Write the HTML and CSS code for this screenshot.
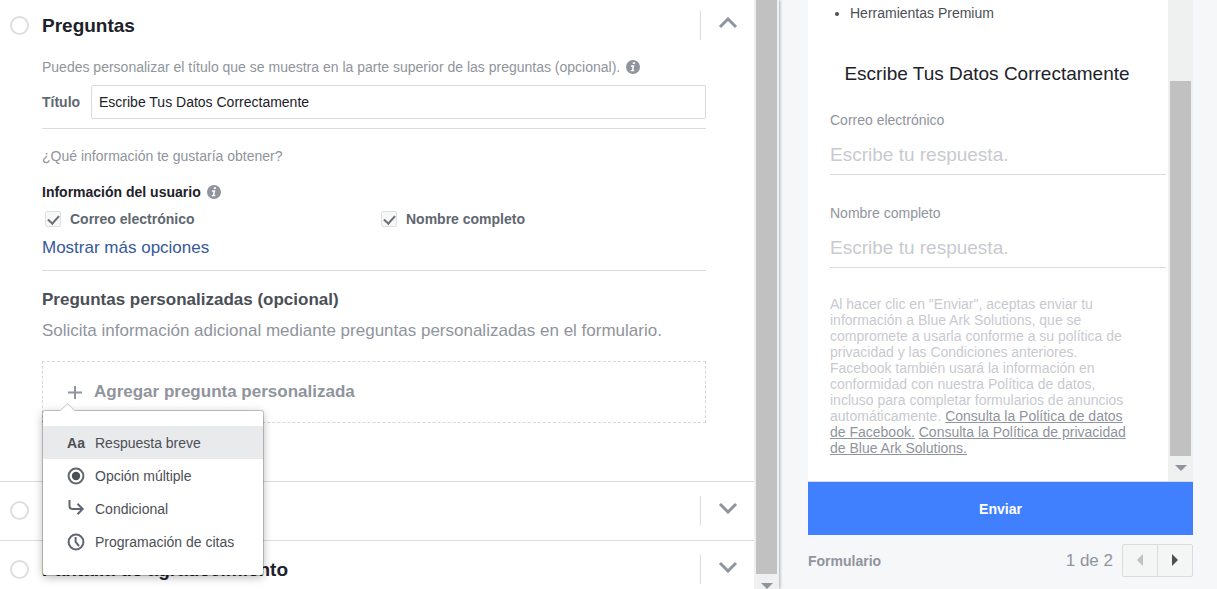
FILE: index.html
```html
<!DOCTYPE html>
<html lang="es">

<head>
    <meta charset="utf-8">
    <meta name="viewport" content="width=device-width, initial-scale=1.0">
    <title>Formulario</title>
    <link rel="stylesheet" href="styles.css">
</head>

<body>
    <div class="app">

        <!-- Editor -->
        <main class="editor">
            <div class="editor-content">

                <section class="section section-open">
                    <div class="section-header">
                        <span class="step"></span>
                        <h2>Preguntas</h2>
                        <button type="button" class="toggle" aria-label="Contraer">
                            <svg width="20" height="12" viewBox="0 0 20 12"><path d="M2 10 L10 2 L18 10"/></svg>
                        </button>
                    </div>

                    <div class="section-body">
                        <p class="hint">Puedes personalizar el título que se muestra en la parte superior de las preguntas (opcional).
                            <svg class="info" width="14" height="14" viewBox="0 0 14 14"><circle cx="7" cy="7" r="7"/><path d="M7 2.2h2.2l-.4 1.9H6.6z M5.2 5.3h3.2l-1 4.6h1l-.3 1.4H4.6l.3-1.4h.9l.7-3.2H4.9z"/></svg>
                        </p>

                        <div class="title-row">
                            <label for="titulo">Título</label>
                            <input type="text" id="titulo" name="titulo" value="Escribe Tus Datos Correctamente">
                        </div>

                        <div class="group">
                            <p class="hint">¿Qué información te gustaría obtener?</p>
                            <h4>Información del usuario
                                <svg class="info" width="14" height="14" viewBox="0 0 14 14"><circle cx="7" cy="7" r="7"/><path d="M7 2.2h2.2l-.4 1.9H6.6z M5.2 5.3h3.2l-1 4.6h1l-.3 1.4H4.6l.3-1.4h.9l.7-3.2H4.9z"/></svg>
                            </h4>
                            <div class="checks">
                                <label class="check" for="correo"><input type="checkbox" id="correo" checked>Correo electrónico</label>
                                <label class="check" for="nombre"><input type="checkbox" id="nombre" checked>Nombre completo</label>
                            </div>
                            <a class="more" href="#">Mostrar más opciones</a>
                        </div>

                        <div class="group custom">
                            <h3>Preguntas personalizadas (opcional)</h3>
                            <p class="lead">Solicita información adicional mediante preguntas personalizadas en el formulario.</p>

                            <div class="add-box">
                                <button type="button" class="add-btn">
                                    <svg width="14" height="14" viewBox="0 0 14 14"><path d="M7 1v13M0 7.500h14"/></svg>
                                    Agregar pregunta personalizada
                                </button>

                                <!-- Menú de tipos de pregunta -->
                                <div class="menu">
                                    <button type="button" class="menu-item active">
                                        <span class="menu-icon letters">Aa</span>Respuesta breve
                                    </button>
                                    <button type="button" class="menu-item">
                                        <svg class="menu-icon" width="18" height="18" viewBox="0 0 18 18"><circle cx="9" cy="9" r="7.4"/><circle class="dot" cx="9" cy="9" r="4.2"/></svg>Opción múltiple
                                    </button>
                                    <button type="button" class="menu-item">
                                        <svg class="menu-icon" width="18" height="18" viewBox="0 0 18 18"><path d="M2.500 0v6a3 3 0 0 0 3 3h10M10.500 3.800l5.200 5.200-5.200 5.200"/></svg>Condicional
                                    </button>
                                    <button type="button" class="menu-item">
                                        <svg class="menu-icon" width="18" height="18" viewBox="0 0 18 18"><circle cx="9" cy="9" r="7.4"/><path d="M8.6 4v5l3.4 4"/></svg>Programación de citas
                                    </button>
                                </div>
                            </div>
                        </div>
                    </div>
                </section>

                <section class="section">
                    <div class="section-header">
                        <span class="step"></span>
                        <h2></h2>
                        <button type="button" class="toggle" aria-label="Expandir">
                            <svg width="20" height="12" viewBox="0 0 20 12"><path d="M2 2 L10 10 L18 2"/></svg>
                        </button>
                    </div>
                </section>

                <section class="section">
                    <div class="section-header">
                        <span class="step"></span>
                        <h2>Pantalla de agradecimiento</h2>
                        <button type="button" class="toggle" aria-label="Expandir">
                            <svg width="20" height="12" viewBox="0 0 20 12"><path d="M2 2 L10 10 L18 2"/></svg>
                        </button>
                    </div>
                </section>
            </div>

            <div class="scrollbar">
                <div class="thumb"></div>
                <svg class="arrow" width="12" height="6" viewBox="0 0 12 6"><path d="M0 0h12L6 6z"/></svg>
            </div>
        </main>

        <!-- Vista previa -->
        <aside class="preview">
            <div class="phone">
                <div class="phone-view">
                    <div class="phone-content">
                        <ul>
                            <li>Herramientas Premium</li>
                        </ul>
                        <h1>Escribe Tus Datos Correctamente</h1>
                        <div class="field">
                            <label for="p-correo">Correo electrónico</label>
                            <input type="text" id="p-correo" placeholder="Escribe tu respuesta.">
                        </div>
                        <div class="field">
                            <label for="p-nombre">Nombre completo</label>
                            <input type="text" id="p-nombre" placeholder="Escribe tu respuesta.">
                        </div>
                        <p class="legal">Al hacer clic en "Enviar", aceptas enviar tu información a Blue Ark Solutions, que se compromete a usarla conforme a su política de privacidad y las Condiciones anteriores. Facebook también usará la información en conformidad con nuestra Política de datos, incluso para completar formularios de anuncios automáticamente. <a href="#">Consulta la Política de datos de Facebook.</a> <a href="#">Consulta la Política de privacidad de Blue Ark Solutions.</a></p>
                    </div>
                    <div class="scrollbar phone-scroll">
                        <div class="thumb"></div>
                        <svg class="arrow" width="12" height="6" viewBox="0 0 12 6"><path d="M0 0h12L6 6z"/></svg>
                    </div>
                </div>
                <button type="button" class="send">Enviar</button>
            </div>

            <div class="pager">
                <b>Formulario</b>
                <span>1 de 2</span>
                <div class="pager-buttons">
                    <button type="button" aria-label="Anterior" disabled><svg width="6" height="12" viewBox="0 0 6 12"><path d="M6 0v12L0 6z"/></svg></button>
                    <button type="button" aria-label="Siguiente"><svg width="6" height="12" viewBox="0 0 6 12"><path d="M0 0v12l6-6z"/></svg></button>
                </div>
            </div>
        </aside>

    </div>
</body>

</html>
```
FILE: styles.css
```css
* {
    box-sizing: border-box;
}

body {
    margin: 0;
    font-family: "Liberation Sans", Arial, sans-serif;
    font-size: 14px;
    line-height: 20px;
    color: #4b4f56;
    background-color: #f6f7f9;
}

h1, h2, h3, h4, p, ul {
    margin: 0;
}

button, input {
    font: inherit;
    color: inherit;
}

button {
    border: none;
    padding: 0;
    background: none;
    cursor: pointer;
}

.app {
    display: flex;
    height: 100vh;
    overflow: hidden;
}

/* Editor */
.editor {
    display: flex;
    flex: 1;
    min-width: 0;
    background-color: #fff;
    box-shadow: 1px 0 3px rgba(0, 0, 0, 0.3);
    z-index: 1;
}

.editor-content {
    flex: 1;
    min-width: 0;
}

.section {
    border-top: 1px solid #dadbdd;
}

.section-open {
    border-top: none;
}

.section-header {
    display: flex;
    align-items: center;
    padding: 14px 0 15px 10px;
}

.section-open .section-header {
    padding-top: 11px;
}

.step {
    width: 19px;
    height: 19px;
    margin-right: 13px;
    border: 2px solid #dddfe2;
    border-radius: 50%;
}

.section-header h2 {
    flex: 1;
    font-size: 19px;
    color: #1d2129;
}

.toggle {
    width: 54px;
    height: 29px;
    padding-bottom: 7px;
    border-left: 1px solid #dadbdd;
}

.toggle svg {
    fill: none;
    stroke: #90949c;
    stroke-width: 3;
    vertical-align: middle;
}

.section-body {
    padding: 2px 48px 58px 42px;
}

.hint {
    color: #90949c;
}

.info {
    margin-left: 2px;
    vertical-align: -2px;
    fill: #90949c;
}

.info path {
    fill: #fff;
}

.title-row {
    display: flex;
    align-items: center;
    margin-top: 8px;
    padding-bottom: 9px;
}

.title-row label {
    flex: 0 0 49px;
    font-weight: bold;
    color: #606770;
}

.title-row input {
    flex: 1;
    min-width: 0;
    height: 34px;
    padding: 0 7px;
    border: 1px solid #dadbdd;
    border-radius: 2px;
    color: #1d2129;
}

.group {
    padding: 17px 0 12px;
    border-top: 1px solid #dadbdd;
}

.group h4 {
    margin-top: 16px;
    font-size: 14px;
    color: #1d2129;
}

.checks {
    display: grid;
    grid-template-columns: 1fr 1fr;
    column-gap: 8px;
    margin: 7px 0 9px;
}

.check {
    display: flex;
    align-items: center;
    padding-left: 3px;
    font-weight: bold;
    color: #606770;
}

.check input {
    appearance: none;
    display: grid;
    place-items: center;
    width: 16px;
    height: 16px;
    margin: 0 9px 0 0;
    border: 1px solid #dddfe2;
    border-radius: 2px;
    background-color: #f8f8f9;
}

.check input:checked::after {
    content: "";
    width: 5px;
    height: 9px;
    margin-bottom: 2px;
    border: solid #6b6f78;
    border-width: 0 2px 2px 0;
    transform: rotate(42deg);
}

.more {
    display: block;
    font-size: 17px;
    color: #365899;
    text-decoration: none;
}

.custom {
    padding: 19px 0 0;
}

.custom h3 {
    font-size: 17px;
    color: #4b4f56;
}

.lead {
    margin: 11px 0 20px;
    font-size: 17px;
    color: #90949c;
}

.add-box {
    position: relative;
    height: 62px;
    padding: 0 25px;
    border: 1px dashed #d5d7da;
}

.add-btn {
    display: flex;
    align-items: center;
    gap: 12px;
    height: 60px;
    font-size: 17px;
    font-weight: bold;
    color: #90949c;
}

.add-btn svg {
    stroke: #90949c;
    stroke-width: 2;
}

/* Menú desplegable */
.menu {
    position: absolute;
    top: 49px;
    left: 0;
    width: 220px;
    padding: 15px 0 17px;
    background-color: #fff;
    border-radius: 2px;
    box-shadow: 0 0 0 1px rgba(0, 0, 0, 0.2), 0 2px 10px rgba(0, 0, 0, 0.3);
}

.menu::before {
    content: "";
    position: absolute;
    top: -6px;
    left: 19px;
    width: 10px;
    height: 10px;
    background-color: #fff;
    border: solid #cfd0d2;
    border-width: 1px 0 0 1px;
    transform: rotate(45deg);
}

.menu-item {
    display: flex;
    align-items: center;
    gap: 10px;
    width: 100%;
    height: 33px;
    padding-left: 24px;
    color: #4b4f56;
}

.menu-item.active {
    background-color: #e9eaeb;
}

.menu-icon {
    width: 18px;
    fill: none;
    stroke: #606770;
    stroke-width: 2;
}

.menu-icon .dot {
    fill: #4b4f56;
    stroke: none;
}

.letters {
    font-weight: bold;
}

/* Barras de desplazamiento */
.scrollbar {
    display: flex;
    flex-direction: column;
    align-items: center;
    flex: 0 0 25px;
    background-color: #eff1f1;
}

.thumb {
    flex: 1;
    width: 21px;
    margin-bottom: 9px;
    background-color: #c1c1c1;
}

.arrow {
    fill: #90949c;
}

/* Vista previa */
.preview {
    flex: 0 0 438px;
    padding: 0 24px 0 29px;
}

.phone-view {
    display: flex;
    background-color: #fff;
    border-bottom: 1px solid #dadbdd;
}

.phone-content {
    flex: 1;
    min-width: 0;
    padding: 3px 2px 25px 22px;
}

.phone-content ul {
    padding-left: 20px;
}

.phone-content h1 {
    margin: 38px 0 24px;
    padding-right: 22px;
    font-size: 19px;
    font-weight: normal;
    line-height: 25px;
    text-align: center;
    color: #1d2129;
}

.field {
    margin-bottom: 28px;
}

.field label {
    display: block;
    color: #90949c;
}

.field input {
    display: block;
    width: 100%;
    height: 45px;
    padding: 5px 0 0;
    border: none;
    border-bottom: 1px solid #dadbdd;
    background: none;
    font-size: 19px;
}

.field input::placeholder {
    color: #c8cacf;
    opacity: 1;
}

.legal {
    max-width: 312px;
    line-height: 16px;
    color: #c8cacf;
}

.legal a {
    color: #90949c;
}

.phone-scroll {
    padding: 81px 0 10px;
}

.send {
    width: 100%;
    height: 53px;
    font-weight: bold;
    color: #fff;
    background-color: #4080ff;
}

.pager {
    display: flex;
    align-items: center;
    margin-top: 9px;
    color: #90949c;
}

.pager b {
    flex: 1;
}

.pager span {
    margin-right: 9px;
    font-size: 17px;
}

.pager-buttons {
    display: flex;
    border: 1px solid #dadbdd;
    border-radius: 2px;
    background-color: #f4f6f5;
}

.pager-buttons button {
    width: 34px;
    height: 31px;
}

.pager-buttons button + button {
    width: 35px;
    border-left: 1px solid #dadbdd;
}

.pager-buttons svg {
    fill: #4b4f56;
}

.pager-buttons button:disabled svg {
    fill: #bec3c9;
}
```
